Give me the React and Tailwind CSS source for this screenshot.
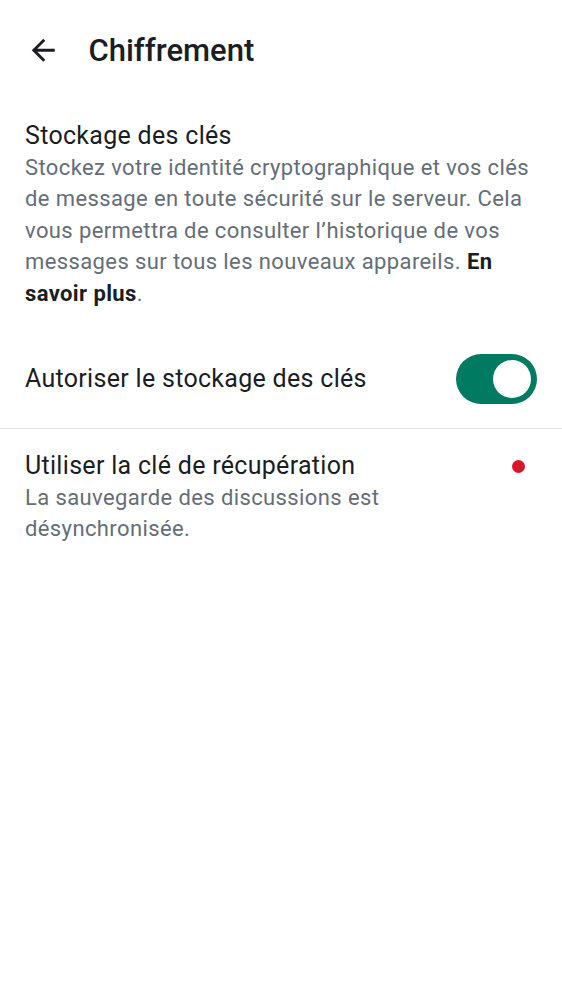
import React from 'react';

const font = { fontFamily: 'Roboto, "Noto Sans", sans-serif' };

export default function App() {
  return (
    <div className="w-[562px] min-h-[1000px] bg-white text-[#1b1d22]" style={font}>
      <div className="flex items-center h-[100px] pl-[26px]">
        <svg width="34.5" height="34.5" viewBox="0 0 24 24" className="text-[#1b1d22]">
          <path d="M20 11H7.83l5.59-5.59L12 4l-8 8 8 8 1.41-1.41L7.83 13H20v-2z" fill="currentColor" />
        </svg>
        <h1 className="ml-[28px] text-[31px] font-medium leading-none">Chiffrement</h1>
      </div>

      <div className="px-[25px] pt-[19px]">
        <h2 className="text-[25px] leading-[33px] tracking-[0.3px]">Stockage des clés</h2>
        <p className="text-[22px] leading-[31.4px] tracking-[0.39px] text-[#656d77]">
          Stockez votre identité cryptographique et vos clés de message en toute sécurité sur le serveur. Cela vous permettra de consulter l’historique de vos messages sur tous les nouveaux appareils.{' '}
          <span className="font-bold text-[#1b1d22]">En savoir plus</span>.
        </p>
      </div>

      <div className="flex items-center justify-between px-[25px] h-[100px] mt-[20px] border-b border-[#e1e3e7]">
        <span className="text-[25px] tracking-[0.3px]">Autoriser le stockage des clés</span>
        <div className="w-[81px] h-[50px] rounded-full bg-[#007a61] flex items-center justify-end pr-[6px]">
          <div className="w-[38px] h-[38px] rounded-full bg-white" />
        </div>
      </div>

      <div className="flex items-start justify-between pl-[25px] pr-[37px] pt-[20px]">
        <div>
          <div className="text-[25px] leading-[33px] tracking-[0.3px]">Utiliser la clé de récupération</div>
          <div className="text-[22px] leading-[31.4px] tracking-[0.39px] text-[#656d77] w-[400px]">La sauvegarde des discussions est désynchronisée.</div>
        </div>
        <div className="w-[13px] h-[13px] rounded-full bg-[#d51928] mt-[11px]" />
      </div>
    </div>
  );
}
